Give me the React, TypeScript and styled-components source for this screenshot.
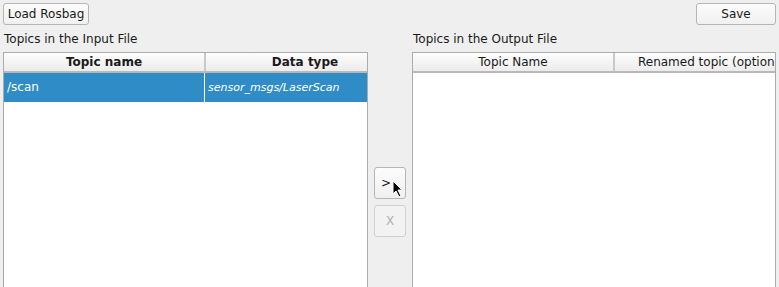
import * as React from "react"
import styled, { createGlobalStyle } from "styled-components"

const GlobalStyle = createGlobalStyle`
  html, body {
    margin: 0;
    padding: 0;
    background: #efefef;
    overflow: hidden;
  }
  body {
    font-family: "DejaVu Sans", "Noto Sans", sans-serif;
    font-size: 12px;
    color: #1a1a1a;
  }
`

const inputTopics = [{ name: "/scan", type: "sensor_msgs/LaserScan" }]

const App = () => (
  <Window>
    <GlobalStyle />
    <TopBar>
      <PushButton width={86}>Load Rosbag</PushButton>
      <PushButton width={80}>Save</PushButton>
    </TopBar>
    <Main>
      <Panel width={365}>
        <GroupLabel>Topics in the Input File</GroupLabel>
        <Table>
          <HeaderRow>
            <HeaderCell bold>Topic name</HeaderCell>
            <HeaderCell bold>Data type</HeaderCell>
          </HeaderRow>
          {inputTopics.map((t) => (
            <Row key={t.name} selected>
              <Cell>{t.name}</Cell>
              <Cell italic>{t.type}</Cell>
            </Row>
          ))}
        </Table>
      </Panel>
      <Middle>
        <ToolButton shift>
          &gt;
          <Cursor viewBox="0 0 12 18" width="12" height="18">
            <path d="M1 1 L1 14 L4 11 L7 17 L9 16 L6 10 L10 10 Z" fill="#000" stroke="#fff" strokeWidth="1" />
          </Cursor>
        </ToolButton>
        <ToolButton disabled>X</ToolButton>
      </Middle>
      <Panel width={364}>
        <GroupLabel>Topics in the Output File</GroupLabel>
        <Table>
          <HeaderRow>
            <HeaderCell>Topic Name</HeaderCell>
            <HeaderCell>Renamed topic (optional)</HeaderCell>
          </HeaderRow>
        </Table>
      </Panel>
    </Main>
  </Window>
)

export default App

const Window = styled.div`
  width: 779px;
  height: 287px;
  box-sizing: border-box;
  padding: 3px 3px 0 3px;
  display: flex;
  flex-direction: column;
`

const TopBar = styled.div`
  display: flex;
  justify-content: space-between;
  height: 22px;
`

const PushButton = styled.button<{ width: number }>`
  box-sizing: border-box;
  width: ${(p) => p.width}px;
  height: 22px;
  padding: 0;
  white-space: nowrap;
  border: 1px solid #b5b5b5;
  border-radius: 3px;
  background: linear-gradient(#fcfcfc, #f0f0f0);
  font-family: inherit;
  font-size: 12px;
  color: #1a1a1a;
`

const Main = styled.div`
  flex: 1;
  display: flex;
  min-height: 0;
`

const Panel = styled.div<{ width: number }>`
  width: ${(p) => p.width}px;
  display: flex;
  flex-direction: column;
`

const GroupLabel = styled.div`
  height: 27px;
  box-sizing: border-box;
  padding: 7px 0 0 1px;
  font-size: 12px;
`

const Table = styled.div`
  flex: 1;
  background: #fff;
  border: 1px solid #ababab;
  border-bottom: none;
  overflow: hidden;
`

const HeaderRow = styled.div`
  display: flex;
  width: max-content;
  height: 18px;
  border-bottom: 2px solid #b9b9b9;
  background: linear-gradient(#fdfdfd, #ececec);
`

const HeaderCell = styled.div<{ bold?: boolean }>`
  width: 200px;
  flex: none;
  box-sizing: border-box;
  line-height: 19px;
  text-align: center;
  font-weight: ${(p) => (p.bold ? "bold" : "normal")};
  white-space: nowrap;
  overflow: hidden;
  & + & {
    border-left: 2px solid #c8c8c8;
  }
`

const Row = styled.div<{ selected?: boolean }>`
  display: flex;
  width: max-content;
  height: 29px;
  background: ${(p) => (p.selected ? "#308cc6" : "#fff")};
  color: ${(p) => (p.selected ? "#fff" : "#1a1a1a")};
`

const Cell = styled.div<{ italic?: boolean }>`
  width: 200px;
  flex: none;
  box-sizing: border-box;
  line-height: 29px;
  padding-left: 3px;
  font-size: ${(p) => (p.italic ? "11px" : "12px")};
  font-style: ${(p) => (p.italic ? "italic" : "normal")};
  white-space: nowrap;
  overflow: hidden;
  & + & {
    border-left: 1px solid #fff;
  }
`

const Middle = styled.div`
  width: 44px;
  display: flex;
  flex-direction: column;
  align-items: center;
  gap: 6px;
  padding-top: 142px;
  box-sizing: border-box;
`

const ToolButton = styled.button<{ shift?: boolean }>`
  position: relative;
  box-sizing: border-box;
  width: 32px;
  height: 32px;
  border: 1px solid ${(p) => (p.disabled ? "#d0d0d0" : "#b5b5b5")};
  border-radius: 3px;
  background: ${(p) => (p.disabled ? "#f2f2f2" : "linear-gradient(#fcfcfc, #f0f0f0)")};
  font-family: inherit;
  font-size: 12px;
  color: ${(p) => (p.disabled ? "#b0b0b0" : "#1a1a1a")};
  padding: 0 ${(p) => (p.shift ? "8px" : "0")} 0 0;
`

const Cursor = styled.svg`
  position: absolute;
  left: 17px;
  top: 12px;
`
